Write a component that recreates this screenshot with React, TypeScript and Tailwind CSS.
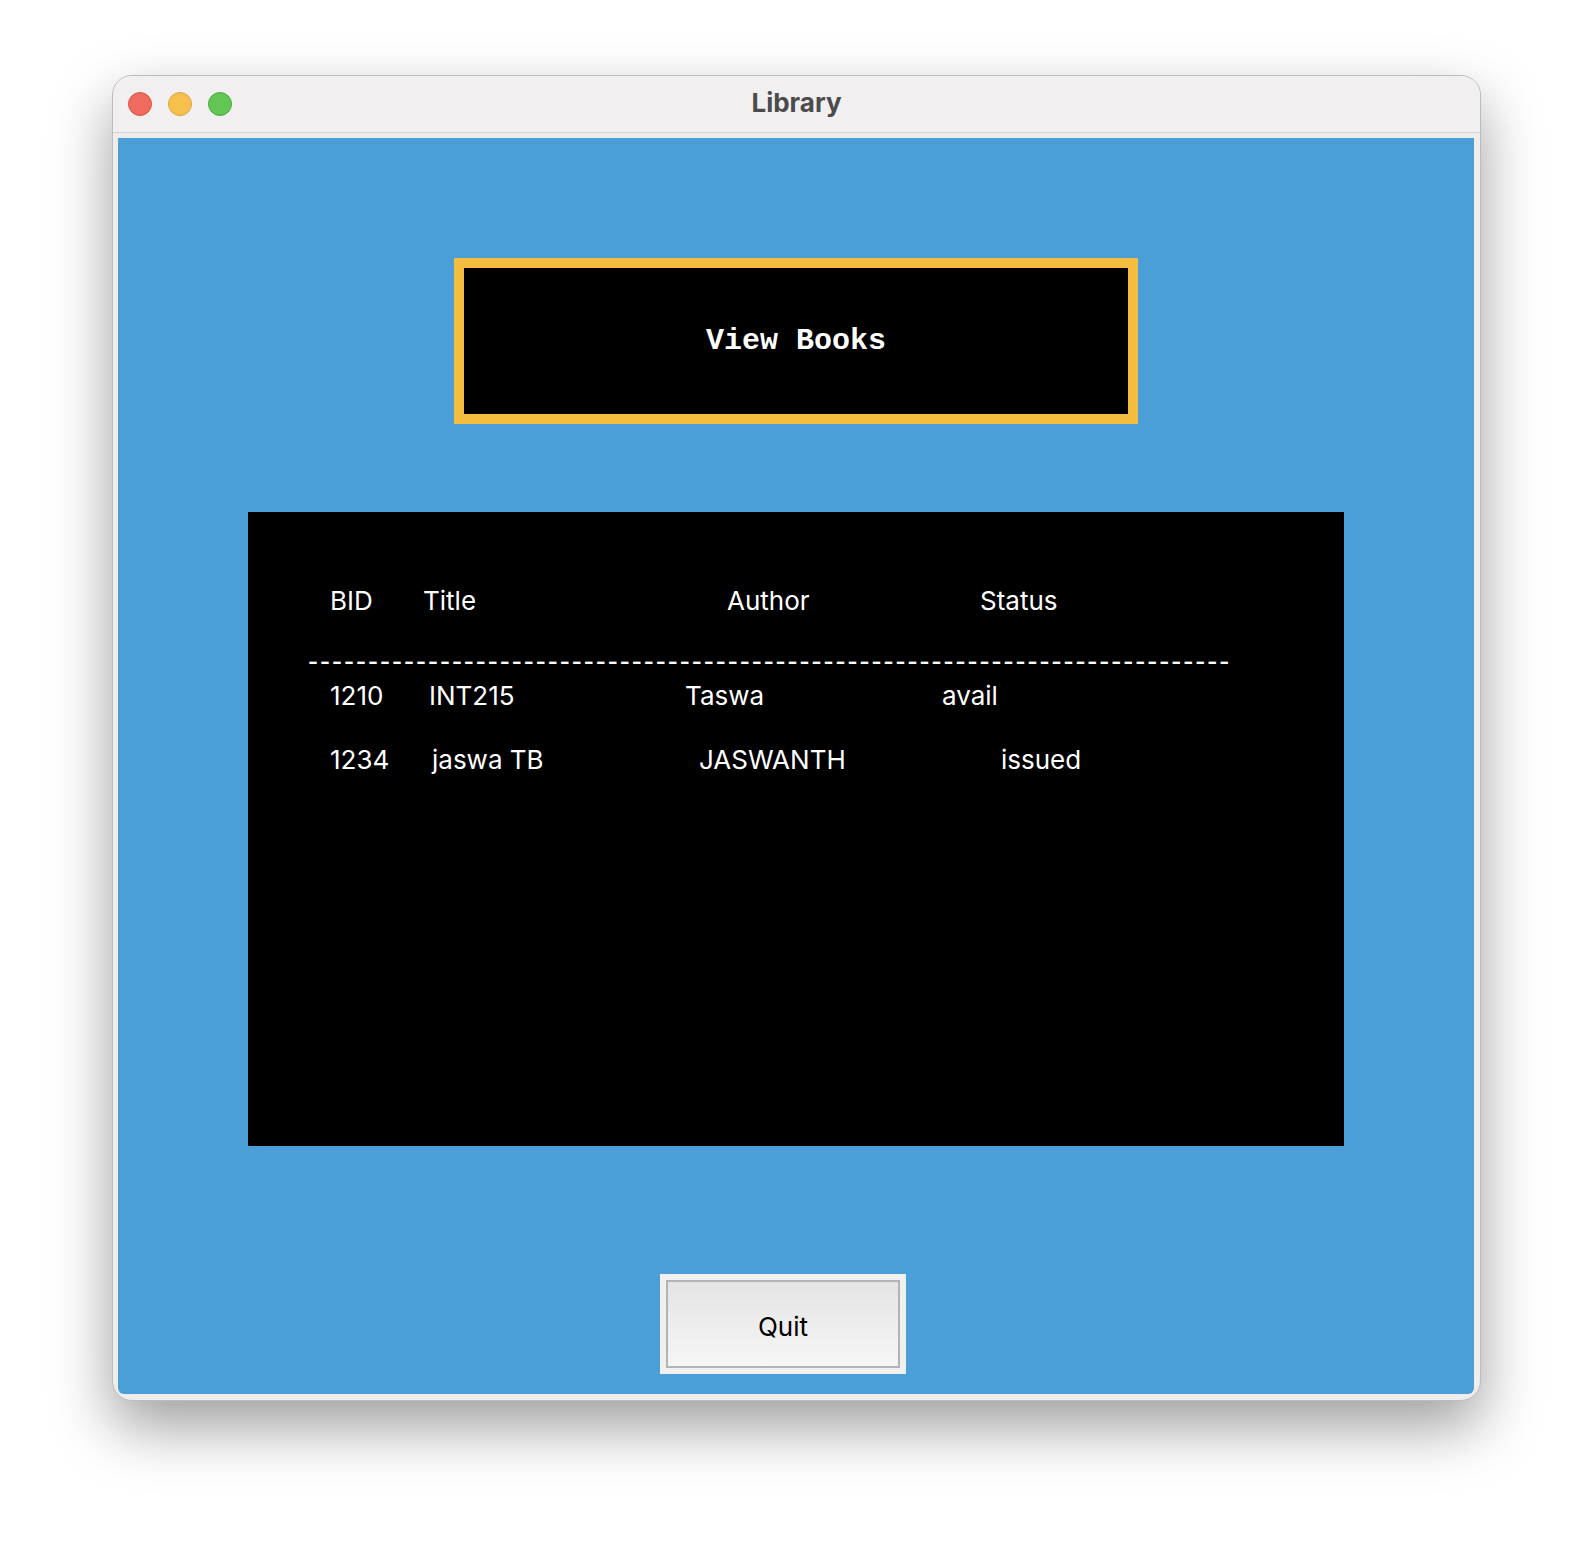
const HEADER = [
  { text: 'BID', w: 'w-[93px]' },
  { text: 'Title', w: 'w-[304px]' },
  { text: 'Author', w: 'w-[253px]' },
  { text: 'Status', w: 'w-auto' },
];

const ROWS = [
  [
    { text: '1210', w: 'w-[99px]' },
    { text: 'INT215', w: 'w-[256px]' },
    { text: 'Taswa', w: 'w-[257px]' },
    { text: 'avail', w: 'w-auto' },
  ],
  [
    { text: '1234', w: 'w-[102px]' },
    { text: 'jaswa TB', w: 'w-[267px]' },
    { text: 'JASWANTH', w: 'w-[302px]' },
    { text: 'issued', w: 'w-auto' },
  ],
];

const DASHES = '-'.repeat(77);

function Row({ cells, className }: { cells: { text: string; w: string }[]; className: string }) {
  return (
    <div className={`flex h-[30px] items-center pl-[82px] text-[26px] leading-[30px] text-white ${className}`}>
      {cells.map((c) => (
        <span key={c.text} className={`${c.w} shrink-0 whitespace-pre`}>
          {c.text}
        </span>
      ))}
    </div>
  );
}

function TrafficLights() {
  return (
    <div className="flex items-center gap-[16px] pl-[15px]">
      <span className="h-[24px] w-[24px] rounded-full border border-[#d9564b] bg-[#ef6b5f]" />
      <span className="h-[24px] w-[24px] rounded-full border border-[#dba239] bg-[#f6c04f]" />
      <span className="h-[24px] w-[24px] rounded-full border border-[#4ba83e] bg-[#62c655]" />
    </div>
  );
}

export default function App() {
  return (
    <div className="h-[1548px] w-[1592px] bg-white pl-[112px] pt-[75px] font-['Inter','Liberation_Sans',sans-serif]">
      <div className="flex h-[1326px] w-[1369px] flex-col overflow-hidden rounded-[20px] border border-[#bcbcbc] bg-[#eeeced] shadow-[0_26px_60px_rgba(0,0,0,0.38)]">
        {/* Title bar */}
        <div className="grid h-[57px] shrink-0 grid-cols-[1fr_auto_1fr] items-center border-b border-[#d4d2d3] bg-[#f1eff0]">
          <TrafficLights />
          <span className="-mt-[3px] text-[26px] font-bold text-[#4b4b4b]">Library</span>
          <span />
        </div>

        {/* Content */}
        <div className="flex-1 pb-[6px] pl-[5px] pr-[6px] pt-[5px]">
          <div className="flex h-[1256px] w-[1356px] flex-col items-center rounded-b-[6px] bg-[#4a9fd6] pt-[120px]">
            <div className="flex h-[166px] w-[684px] shrink-0 items-center justify-center border-[10px] border-[#f5bd3f] bg-black">
              <span className="font-['Liberation_Mono','DejaVu_Sans_Mono',monospace] text-[30px] font-bold text-white">
                View Books
              </span>
            </div>

            <div className="mt-[88px] h-[634px] w-[1096px] shrink-0 bg-black pt-[74px]">
              <Row cells={HEADER} className="" />
              <div className="mt-[30px] h-[30px] pl-[60px] font-['Liberation_Sans',sans-serif] text-[30px] leading-[30px] tracking-[2px] text-white">
                {DASHES}
              </div>
              <Row cells={ROWS[0]} className="mt-[5px]" />
              <Row cells={ROWS[1]} className="mt-[34px]" />
            </div>

            <div className="ml-[542px] mt-[128px] h-[100px] w-[246px] self-start bg-[#f0f0f0] p-[6px]">
              <button className="flex h-full w-full items-center justify-center border-2 border-[#b3b3b3] bg-gradient-to-b from-[#e4e4e4] to-[#f6f6f6] pt-[5px] text-[26px] text-black">
                Quit
              </button>
            </div>
          </div>
        </div>
      </div>
    </div>
  );
}
